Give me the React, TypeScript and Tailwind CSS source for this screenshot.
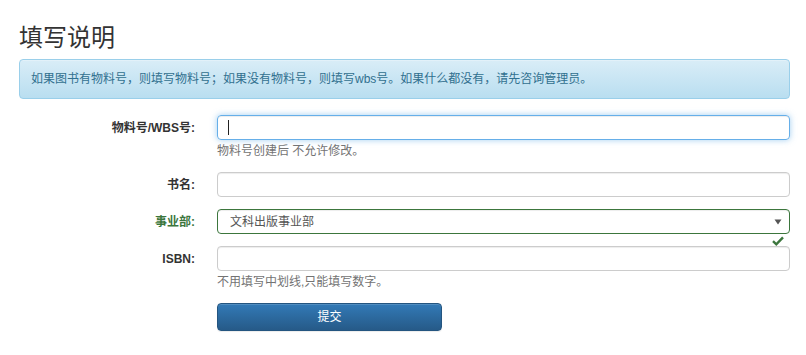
import React from "react";

export default function App() {
  return (
    <div className="min-h-[355px] bg-white pl-[19px] pr-[16px] pt-[25px] font-['Liberation_Sans','Noto_Sans_CJK_SC',sans-serif] text-[12px] text-[#333]">
      <h3 className="mb-[8px] text-[24px] font-normal leading-[26px] text-[#333]">填写说明</h3>
      <div className="flex h-[40px] items-center rounded-[4px] border border-[#9acfea] bg-gradient-to-b from-[#d9edf7] to-[#b9def0] px-[11px] text-[#31708f] shadow-[inset_0_1px_0_rgba(255,255,255,0.25)]">
        如果图书有物料号，则填写物料号；如果没有物料号，则填写wbs号。如果什么都没有，请先咨询管理员。
      </div>

      <form className="mt-[16px] flex flex-col gap-[12px]" onSubmit={(e) => e.preventDefault()}>
        <div className="grid grid-cols-[176px_1fr] gap-x-[22px]">
          <label className="flex h-[25px] items-center justify-end font-bold">物料号/WBS号:</label>
          <div>
            <div className="relative">
              <input
                readOnly
                className="block h-[25px] w-full rounded-[4px] border border-[#66afe9] px-[12px] text-[12px] text-[#555] shadow-[inset_0_1px_1px_rgba(0,0,0,0.075),0_0_6px_rgba(102,175,233,0.6)] outline-none"
              />
              <span className="absolute left-[11px] top-[5px] h-[15px] w-px bg-[#222]" />
            </div>
            <div className="mt-[3px] leading-[17px] text-[#737373]">物料号创建后 不允许修改。</div>
          </div>
        </div>

        <div className="grid grid-cols-[176px_1fr] gap-x-[22px]">
          <label className="flex h-[25px] items-center justify-end font-bold">书名:</label>
          <input
            readOnly
            className="block h-[25px] w-full rounded-[4px] border border-[#ccc] px-[12px] text-[12px] text-[#555] shadow-[inset_0_1px_1px_rgba(0,0,0,0.075)] outline-none"
          />
        </div>

        <div className="grid grid-cols-[176px_1fr] gap-x-[22px]">
          <label className="flex h-[25px] items-center justify-end font-bold text-[#3c763d]">事业部:</label>
          <div className="relative">
            <div className="flex h-[25px] w-full items-center rounded-[4px] border border-[#3c763d] pl-[12px] pr-[6px] text-[12px] text-[#555] shadow-[inset_0_1px_1px_rgba(0,0,0,0.075)]">
              <span className="flex-1">文科出版事业部</span>
              <svg width="8" height="6" viewBox="0 0 8 6" className="mr-[1px]">
                <polygon points="0.5,0.5 7.5,0.5 4,5.5" fill="#555" />
              </svg>
            </div>
            <svg
              width="12"
              height="10"
              viewBox="0 0 12 10"
              className="absolute right-[6px] top-[27px]"
            >
              <path d="M1 5.2 L4.3 8.3 L11 1.3" fill="none" stroke="#3c763d" strokeWidth="2.4" strokeLinejoin="miter" />
            </svg>
          </div>
        </div>

        <div className="grid grid-cols-[176px_1fr] gap-x-[22px]">
          <label className="flex h-[25px] items-center justify-end font-bold">ISBN:</label>
          <div>
            <input
              readOnly
              className="block h-[25px] w-full rounded-[4px] border border-[#ccc] px-[12px] text-[12px] text-[#555] shadow-[inset_0_1px_1px_rgba(0,0,0,0.075)] outline-none"
            />
            <div className="mt-[3px] leading-[17px] text-[#737373]">不用填写中划线,只能填写数字。</div>
          </div>
        </div>

        <div className="grid grid-cols-[176px_1fr] gap-x-[22px]">
          <div />
          <div>
            <button
              type="submit"
              className="h-[28px] w-[225px] rounded-[4px] border border-[#245580] bg-gradient-to-b from-[#337ab7] to-[#265a88] text-[12px] text-white shadow-[inset_0_1px_0_rgba(255,255,255,0.15),0_1px_1px_rgba(0,0,0,0.075)]"
            >
              提交
            </button>
          </div>
        </div>
      </form>
    </div>
  );
}
